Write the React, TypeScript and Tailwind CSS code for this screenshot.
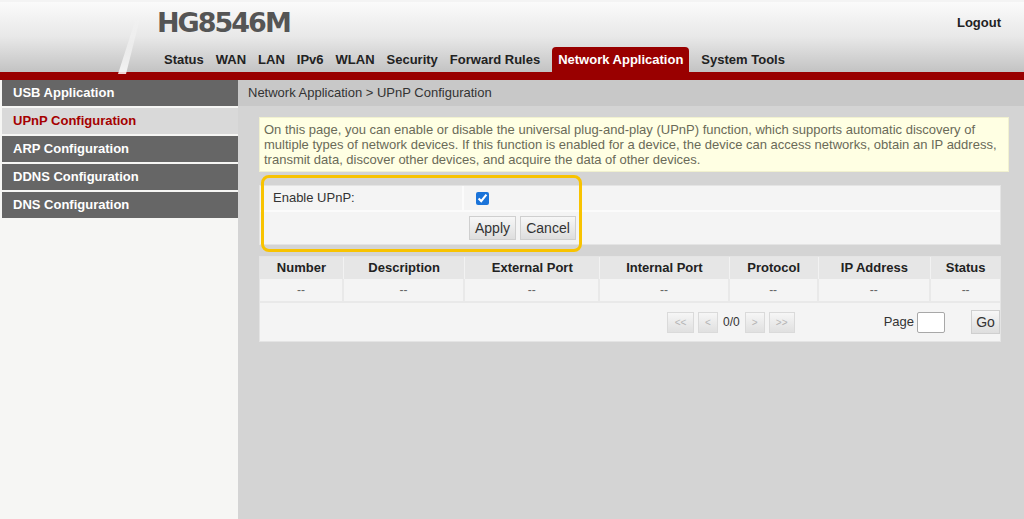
import { useState } from "react";

const navItems = ["Status", "WAN", "LAN", "IPv6", "WLAN", "Security", "Forward Rules", "Network Application", "System Tools"];
const sideItems = ["USB Application", "UPnP Configuration", "ARP Configuration", "DDNS Configuration", "DNS Configuration"];
const columns = [
  { name: "Number", w: "w-[84px]" },
  { name: "Description", w: "w-[122px]" },
  { name: "External Port", w: "w-[135px]" },
  { name: "Internal Port", w: "w-[130px]" },
  { name: "Protocol", w: "w-[89px]" },
  { name: "IP Address", w: "w-[113px]" },
  { name: "Status", w: "w-[69px]" },
];

function GrayButton({ label, className }: { label: string; className: string }) {
  return (
    <button
      className={`h-[24px] border border-[#cfcfcf] bg-gradient-to-b from-[#f7f7f7] to-[#dedede] text-[14px] text-[#333] ${className}`}
    >
      {label}
    </button>
  );
}

function PagerButton({ label, w }: { label: string; w: string }) {
  return (
    <span
      className={`h-[21px] ${w} flex items-center justify-center border border-[#dadada] bg-gradient-to-b from-[#f6f6f6] to-[#e0e0e0] text-[10px] text-[#b5b5b5]`}
    >
      {label}
    </span>
  );
}

export default function App() {
  const [enabled, setEnabled] = useState(true);
  const active = "Network Application";

  return (
    <div className="w-[1024px] h-[519px] overflow-hidden flex flex-col font-['Liberation_Sans',Arial,sans-serif] bg-[#d4d4d4]">
      {/* header */}
      <div className="relative h-[72px] flex bg-gradient-to-b from-[#fbfbfb] via-[#e8e8e8] to-[#c3c3c3] border-t-2 border-[#f4f4f4]">
        <svg className="absolute left-0 top-0" width="160" height="72" viewBox="0 0 160 72">
          <defs>
            <linearGradient id="streak" x1="0" y1="0" x2="0" y2="1">
              <stop offset="0" stopColor="#ffffff" stopOpacity="0" />
              <stop offset="0.6" stopColor="#ffffff" stopOpacity="0.5" />
              <stop offset="1" stopColor="#ffffff" stopOpacity="0.85" />
            </linearGradient>
          </defs>
          <polygon points="136,16 140,16 126,72 118,72" fill="url(#streak)" />
        </svg>
        <div className="flex flex-col justify-between pl-[157px]">
          <div className="mt-[7px] text-[27px] tracking-[-2px] font-bold leading-none text-[#555] font-['DejaVu_Sans',sans-serif]">
            HG8546M
          </div>
          <div className="flex items-end ml-[7px] gap-[12px]">
            {navItems.map((item) =>
              item === active ? (
                <span
                  key={item}
                  className="h-[25px] px-[6px] flex items-center rounded-t-[4px] bg-[#990000] text-white text-[13px] font-bold"
                >
                  {item}
                </span>
              ) : (
                <span key={item} className="h-[25px] flex items-center text-[13px] font-bold text-[#222]">
                  {item}
                </span>
              )
            )}
          </div>
        </div>
        <div className="ml-auto mt-[11px] mr-[23px] text-[13px] font-bold text-[#222]">Logout</div>
      </div>
      <div className="h-[8px] bg-[#990000]" />

      {/* body */}
      <div className="flex flex-1">
        <div className="w-[238px] pl-[2px] bg-[#f6f6f4] flex flex-col gap-[2px]">
          {sideItems.map((item) => (
            <div
              key={item}
              className={`h-[26px] pl-[11px] flex items-center text-[13px] font-bold ${
                item === "UPnP Configuration" ? "bg-[#d9d9d9] text-[#a50000]" : "bg-[#666666] text-white"
              }`}
            >
              {item}
            </div>
          ))}
        </div>

        <div className="flex-1 flex flex-col">
          <div className="h-[26px] pl-[10px] flex items-center bg-[#c8c8c8] text-[13px] text-[#333]">
            Network Application &gt; UPnP Configuration
          </div>

          <div className="pl-[21px] pt-[11px] flex flex-col">
            <div className="w-[750px] h-[55px] px-[4px] pt-[4px] bg-[#ffffe3] border border-[#f1f1cf] text-[13px] leading-[15px] text-[#6a6a58]">
              On this page, you can enable or disable the universal plug-and-play (UPnP) function, which supports automatic discovery of
              <br />
              multiple types of network devices. If this function is enabled for a device, the device can access networks, obtain an IP address,
              <br />
              transmit data, discover other devices, and acquire the data of other devices.
            </div>

            <div className="relative mt-[13px] w-[742px]">
              <div className="flex flex-col bg-[#f4f4f4] border border-[#e4e4e4]">
                <div className="h-[26px] flex border-b-2 border-[#fbfbfb]">
                  <div className="w-[204px] pl-[13px] flex items-center text-[13px] text-[#333] border-r-2 border-[#fbfbfb]">
                    Enable UPnP:
                  </div>
                  <div className="flex-1 pl-[12px] flex items-center">
                    <input
                      type="checkbox"
                      checked={enabled}
                      onChange={(e) => setEnabled(e.target.checked)}
                      className="w-[13px] h-[13px] accent-[#1a73d9]"
                    />
                  </div>
                </div>
                <div className="h-[32px] flex items-center pl-[209px] gap-[4px]">
                  <GrayButton label="Apply" className="w-[47px]" />
                  <GrayButton label="Cancel" className="w-[56px]" />
                </div>
              </div>
              <div className="absolute left-[2px] top-[-10px] w-[321px] h-[77px] rounded-[8px] border-[3px] border-[#f8c300]" />
            </div>

            <div className="mt-[11px] w-[742px] flex flex-col bg-[#f4f4f4] border border-[#e4e4e4]">
              <div className="h-[22px] flex bg-[#e6e6e6]">
                {columns.map((c, i) => (
                  <div
                    key={c.name}
                    className={`${c.w} flex items-center justify-center text-[13px] font-bold text-[#222] ${
                      i < columns.length - 1 ? "border-r border-[#f2f2f2]" : ""
                    }`}
                  >
                    {c.name}
                  </div>
                ))}
              </div>
              <div className="h-[24px] flex border-b-2 border-[#e9e9e9]">
                {columns.map((c, i) => (
                  <div
                    key={c.name}
                    className={`${c.w} flex items-center justify-center text-[12px] text-[#666] ${
                      i < columns.length - 1 ? "border-r-2 border-[#e9e9e9]" : ""
                    }`}
                  >
                    --
                  </div>
                ))}
              </div>
              <div className="h-[38px] flex items-center">
                <div className="ml-[407px] flex items-center gap-[4px]">
                  <PagerButton label="<<" w="w-[27px]" />
                  <PagerButton label="<" w="w-[20px]" />
                  <span className="text-[12px] text-[#333] px-[1px]">0/0</span>
                  <PagerButton label=">" w="w-[20px]" />
                  <PagerButton label=">>" w="w-[26px]" />
                </div>
                <div className="ml-auto flex items-center">
                  <span className="text-[13px] text-[#333]">Page</span>
                  <span className="ml-[3px] w-[28px] h-[21px] bg-white border border-[#a8a8a8] rounded-[2px]" />
                  <GrayButton label="Go" className="ml-[26px] w-[29px]" />
                </div>
              </div>
            </div>
          </div>
        </div>
      </div>
    </div>
  );
}
